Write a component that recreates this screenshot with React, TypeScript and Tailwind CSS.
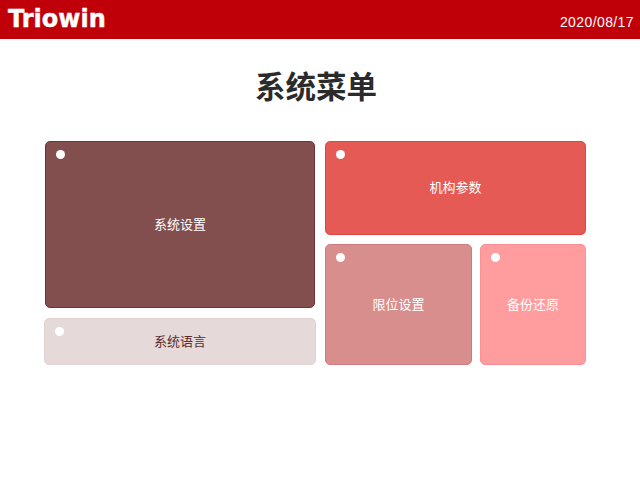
const sans = { fontFamily: '"Liberation Sans", "Noto Sans CJK SC", sans-serif' };

function Tile({ label, className, dark }: { label: string; className: string; dark?: boolean }) {
  return (
    <div className={`relative flex items-center justify-center rounded-[5px] border text-[13px] ${dark ? "text-[#5a2a2c]" : "text-white"} ${className}`}>
      <span className="absolute left-[10px] top-[8px] h-[9px] w-[9px] rounded-full bg-white" />
      {label}
    </div>
  );
}

export default function App() {
  return (
    <div className="h-[480px] w-[640px] overflow-hidden bg-white" style={sans}>
      <header className="flex h-[39px] items-center justify-between bg-[#bf0008] pl-[8px] pr-[6px] text-white">
        <span className="mt-[-1px] text-[24px] font-bold leading-none [-webkit-text-stroke:0.4px_white] [font-family:'DejaVu_Sans',sans-serif]">Triowin</span>
        <span className="mt-[5px] text-[14px] tracking-[0.4px]">2020/08/17</span>
      </header>

      <div className="ml-[44px] w-[542px]">
        <h1 className="mt-[28px] h-[44px] pl-[2px] text-center text-[30.5px] font-bold leading-[40px] text-[#2b2b2b]">系统菜单</h1>

        <div className="mt-[30px] flex h-[224px] gap-[9px]">
          <div className="flex w-[272px] flex-col">
            <Tile label="系统设置" className="mx-[1px] h-[167px] border-[#6e3336] bg-[#824e4e]" />
            <Tile label="系统语言" dark className="mt-[10px] h-[47px] border-[#e0d2d2] bg-[#e6d9d9]" />
          </div>
          <div className="flex w-[261px] flex-col">
            <Tile label="机构参数" className="h-[94px] border-[#e04444] bg-[#e65a56]" />
            <div className="mt-[9px] flex h-[121px] gap-[8px]">
              <Tile label="限位设置" className="w-[147px] border-[#d07c7e] bg-[#d98e8e]" />
              <Tile label="备份还原" className="w-[106px] border-[#fa9094] bg-[#ff9c9e]" />
            </div>
          </div>
        </div>
      </div>
    </div>
  );
}
